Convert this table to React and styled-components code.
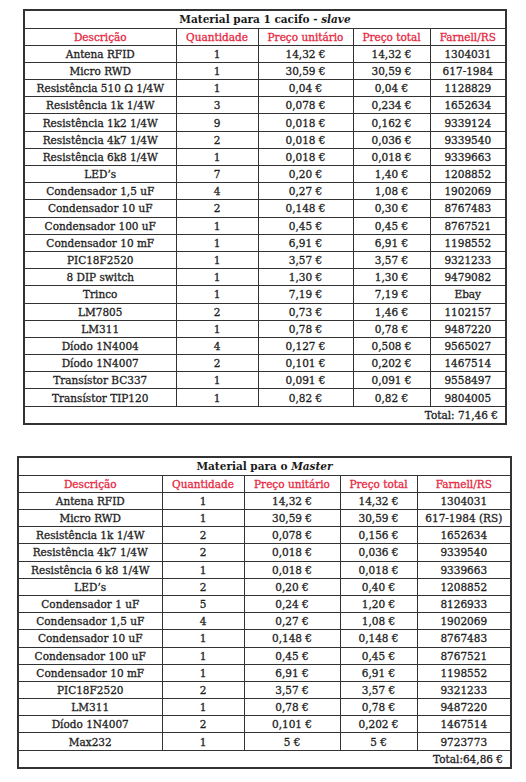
import React from "react";
import styled, { createGlobalStyle } from "styled-components";

const Global = createGlobalStyle`
  html, body { margin: 0; padding: 0; background: #fff; }
  body { font-family: "DejaVu Serif", "Liberation Serif", serif; }
`;

const Page = styled.div`
  width: 526px;
  height: 782px;
  display: flex;
  flex-direction: column;
  gap: 31px;
  padding-top: 9px;
  box-sizing: border-box;
`;

const Table = styled.table`
  border-collapse: collapse;
  margin-left: ${(p) => p.$left}px;
  width: ${(p) => p.$width}px;
  table-layout: fixed;
  font-size: 10.5px;
  color: #1c1c1c;
  border: 2px solid #333;
`;

const Cell = styled.td`
  border: 1px solid #333;
  height: 16.2px;
  padding: 0 1px;
  text-align: center;
  white-space: nowrap;
  line-height: 14px;
  -webkit-text-stroke: 0.3px currentColor;
  color: ${(p) => (p.$head ? "#e8283f" : "#1e1e1e")};
`;

const TitleCell = styled.td`
  border: 1px solid #333;
  height: 16.5px;
  padding: 0;
  text-align: center;
  font-weight: bold;
  color: #1a1a1a;
  font-size: 10.5px;
`;

const TotalCell = styled.td`
  border: 1px solid #333;
  height: 16.5px;
  padding: 0 7px 0 0;
  text-align: right;
  color: #1e1e1e;
  -webkit-text-stroke: 0.3px currentColor;
`;

const headers = ["Descrição", "Quantidade", "Preço unitário", "Preço total", "Farnell/RS"];

const slave = [
  ["Antena RFID", "1", "14,32 €", "14,32 €", "1304031"],
  ["Micro RWD", "1", "30,59 €", "30,59 €", "617-1984"],
  ["Resistência 510 Ω 1/4W", "1", "0,04 €", "0,04 €", "1128829"],
  ["Resistência 1k 1/4W", "3", "0,078 €", "0,234 €", "1652634"],
  ["Resistência 1k2 1/4W", "9", "0,018 €", "0,162 €", "9339124"],
  ["Resistência 4k7 1/4W", "2", "0,018 €", "0,036 €", "9339540"],
  ["Resistência 6k8 1/4W", "1", "0,018 €", "0,018 €", "9339663"],
  ["LED’s", "7", "0,20 €", "1,40 €", "1208852"],
  ["Condensador 1,5 uF", "4", "0,27 €", "1,08 €", "1902069"],
  ["Condensador 10 uF", "2", "0,148 €", "0,30 €", "8767483"],
  ["Condensador 100 uF", "1", "0,45 €", "0,45 €", "8767521"],
  ["Condensador 10 mF", "1", "6,91 €", "6,91 €", "1198552"],
  ["PIC18F2520", "1", "3,57 €", "3,57 €", "9321233"],
  ["8 DIP switch", "1", "1,30 €", "1,30 €", "9479082"],
  ["Trinco", "1", "7,19 €", "7,19 €", "Ebay"],
  ["LM7805", "2", "0,73 €", "1,46 €", "1102157"],
  ["LM311", "1", "0,78 €", "0,78 €", "9487220"],
  ["Díodo 1N4004", "4", "0,127 €", "0,508 €", "9565027"],
  ["Díodo 1N4007", "2", "0,101 €", "0,202 €", "1467514"],
  ["Transístor BC337", "1", "0,091 €", "0,091 €", "9558497"],
  ["Transístor TIP120", "1", "0,82 €", "0,82 €", "9804005"],
];

const master = [
  ["Antena RFID", "1", "14,32 €", "14,32 €", "1304031"],
  ["Micro RWD", "1", "30,59 €", "30,59 €", "617-1984 (RS)"],
  ["Resistência 1k 1/4W", "2", "0,078 €", "0,156 €", "1652634"],
  ["Resistência 4k7 1/4W", "2", "0,018 €", "0,036 €", "9339540"],
  ["Resistência 6 k8 1/4W", "1", "0,018 €", "0,018 €", "9339663"],
  ["LED’s", "2", "0,20 €", "0,40 €", "1208852"],
  ["Condensador 1 uF", "5", "0,24 €", "1,20 €", "8126933"],
  ["Condensador 1,5 uF", "4", "0,27 €", "1,08 €", "1902069"],
  ["Condensador 10 uF", "1", "0,148 €", "0,148 €", "8767483"],
  ["Condensador 100 uF", "1", "0,45 €", "0,45 €", "8767521"],
  ["Condensador 10 mF", "1", "6,91 €", "6,91 €", "1198552"],
  ["PIC18F2520", "2", "3,57 €", "3,57 €", "9321233"],
  ["LM311", "1", "0,78 €", "0,78 €", "9487220"],
  ["Díodo 1N4007", "2", "0,101 €", "0,202 €", "1467514"],
  ["Max232", "1", "5 €", "5 €", "9723773"],
];

function MaterialTable({ left, widths, title, rows, total }) {
  const width = widths.reduce((a, b) => a + b, 0);
  return (
    <Table $left={left} $width={width}>
      <colgroup>
        {widths.map((w, i) => (
          <col key={i} style={{ width: w }} />
        ))}
      </colgroup>
      <tbody>
        <tr>
          <TitleCell colSpan={5}>{title}</TitleCell>
        </tr>
        <tr>
          {headers.map((h) => (
            <Cell key={h} $head>
              {h}
            </Cell>
          ))}
        </tr>
        {rows.map((r, i) => (
          <tr key={i}>
            {r.map((c, j) => (
              <Cell key={j}>{c}</Cell>
            ))}
          </tr>
        ))}
        <tr>
          <TotalCell colSpan={5}>{total}</TotalCell>
        </tr>
      </tbody>
    </Table>
  );
}

export default function App() {
  return (
    <>
      <Global />
      <Page>
        <MaterialTable
          left={23}
          widths={[152, 82, 95, 77, 76]}
          title={
            <>
              Material para 1 cacifo - <i>slave</i>
            </>
          }
          rows={slave}
          total="Total: 71,46 €"
        />
        <MaterialTable
          left={17}
          widths={[144, 82, 96, 77, 94]}
          title={
            <>
              Material para o <i>Master</i>
            </>
          }
          rows={master}
          total="Total:64,86 €"
        />
      </Page>
    </>
  );
}
